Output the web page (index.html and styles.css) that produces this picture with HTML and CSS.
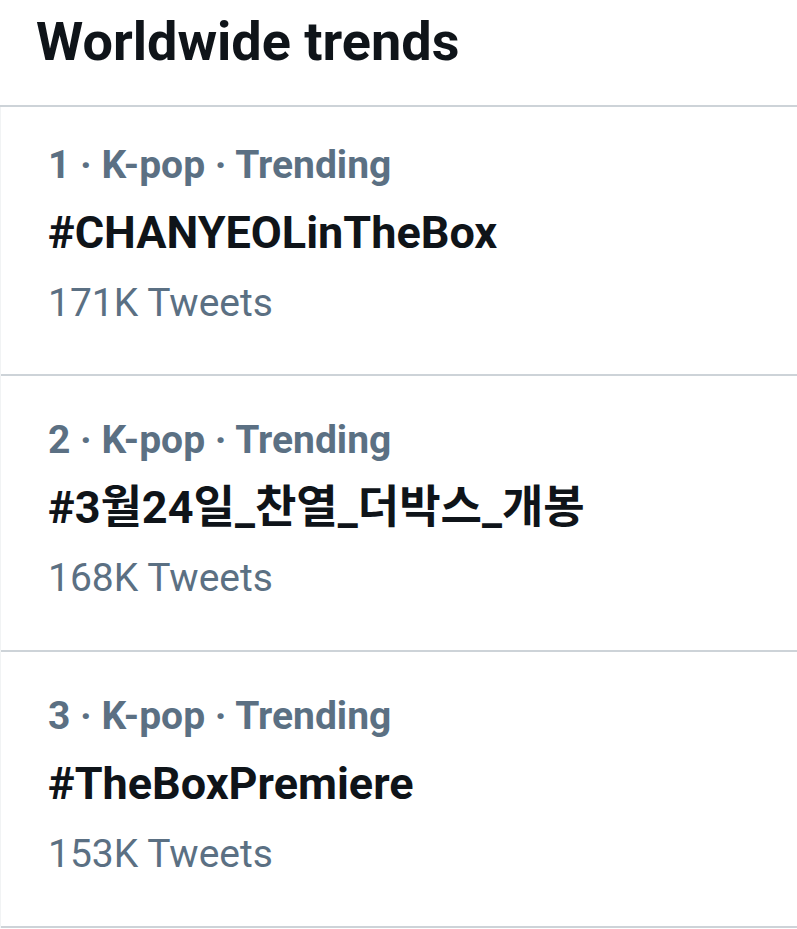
FILE: index.html
```html
<!DOCTYPE html>
<html lang="en">
<head>
    <meta charset="UTF-8">
    <meta name="viewport" content="width=device-width, initial-scale=1.0">
    <title>Worldwide trends</title>
    <link rel="stylesheet" href="styles.css">
</head>
<body>
    <div class="panel">
        <h2 class="panel-title">Worldwide trends</h2>
        <div class="trends">
            <div class="trend">
                <div class="trend-meta">1 · K-pop · Trending</div>
                <div class="trend-name">#CHANYEOLinTheBox</div>
                <div class="trend-count">171K Tweets</div>
            </div>
            <div class="trend">
                <div class="trend-meta">2 · K-pop · Trending</div>
                <div class="trend-name">#3월24일_찬열_더박스_개봉</div>
                <div class="trend-count">168K Tweets</div>
            </div>
            <div class="trend">
                <div class="trend-meta">3 · K-pop · Trending</div>
                <div class="trend-name">#TheBoxPremiere</div>
                <div class="trend-count">153K Tweets</div>
            </div>
        </div>
    </div>
</body>
</html>
```

FILE: styles.css
```css
body {
    font-family: Roboto, "Noto Sans CJK KR", Arial, sans-serif;
    margin: 0;
    padding: 0;
    background-color: #fff;
    color: #0f1419;
}
.panel {
    width: 797px;
}
.panel-title {
    margin: 0;
    height: 107px;
    box-sizing: border-box;
    padding: 8px 0 0 36px;
    font-size: 54px;
    line-height: 68px;
    font-weight: 700;
    border-bottom: 2px solid #cdd3d8;
}
.trends {
    border-left: 1px solid #f1f3f4;
}
.trend {
    padding: 30px 0 36px 47px;
    border-bottom: 2px solid #cdd3d8;
}
.trend:first-child {
    padding-top: 24px;
    padding-bottom: 35px;
}
.trend-meta,
.trend-name,
.trend-count {
    line-height: 68px;
    white-space: nowrap;
}
.trend-meta {
    font-size: 39px;
    font-weight: 700;
    color: #5b7083;
}
.trend-name {
    font-size: 45px;
    font-weight: 700;
    color: #0f1419;
}
.trend-count {
    font-size: 39px;
    line-height: 72px;
    color: #5b7083;
}
```
